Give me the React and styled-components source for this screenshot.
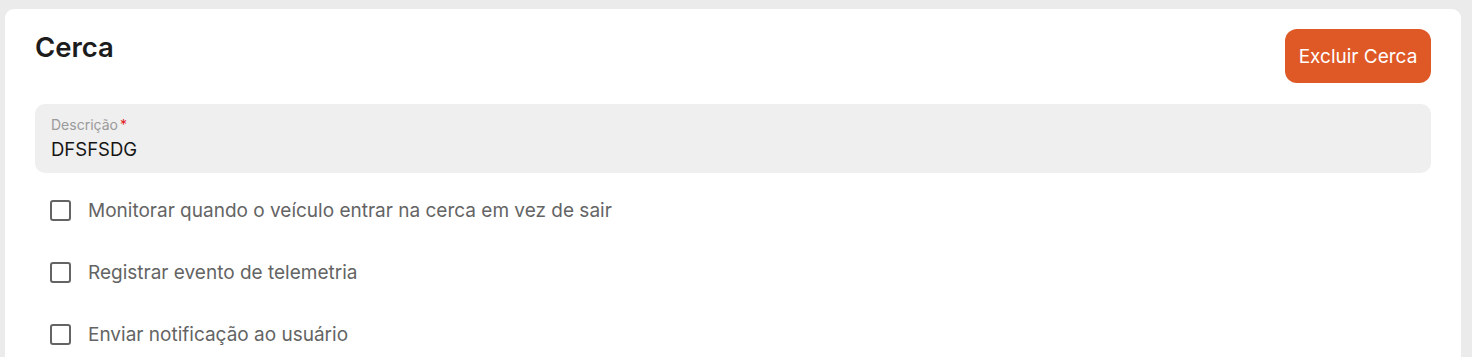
import styled, { createGlobalStyle } from "styled-components";

const GlobalStyle = createGlobalStyle`
  html, body {
    margin: 0;
    padding: 0;
    background: #ebebeb;
    font-family: Inter, "Noto Sans", sans-serif;
  }
`;

const Page = styled.div`
  padding: 9px 11px 0 5px;
  height: 357px;
  box-sizing: border-box;
  overflow: hidden;
`;

const Card = styled.div`
  background: #fff;
  border-radius: 9px;
  padding: 20px 30px 40px 30px;
  min-height: 400px;
  box-sizing: border-box;
`;

const Header = styled.div`
  display: flex;
  justify-content: space-between;
  align-items: flex-start;
`;

const Title = styled.h2`
  margin: 0;
  padding-top: 2px;
  font-size: 27.5px;
  font-weight: 600;
  color: #1c1c1c;
  line-height: 32px;
`;

const DangerButton = styled.button`
  height: 54px;
  width: 146px;
  border: none;
  border-radius: 12px;
  background: #df5927;
  color: #fff;
  font-family: Inter, "Noto Sans", sans-serif;
  font-size: 19px;
  cursor: pointer;
`;

const Field = styled.div`
  margin-top: 21px;
  height: 69px;
  box-sizing: border-box;
  background: #efefef;
  border-radius: 10px;
  padding: 12px 16px;
  display: flex;
  flex-direction: column;
`;

const Label = styled.span`
  font-size: 14px;
  line-height: 17px;
  color: #9a9a9a;
`;

const Required = styled.span`
  color: #e02020;
  margin-left: 2px;
`;

const Value = styled.span`
  margin-top: 4px;
  font-size: 18.5px;
  line-height: 24px;
  color: #151515;
`;

const Options = styled.div`
  display: flex;
  flex-direction: column;
  padding-left: 15px;
  margin-top: 16px;
  gap: 20px;
`;

const Option = styled.label`
  display: flex;
  align-items: center;
  gap: 17px;
  height: 42px;
  cursor: pointer;
`;

const Box = styled.span`
  width: 21px;
  height: 21px;
  box-sizing: border-box;
  border: 2.5px solid #646464;
  border-radius: 3px;
  flex-shrink: 0;
`;

const OptionText = styled.span`
  font-size: 19px;
  color: #646464;
`;

const options = [
  "Monitorar quando o veículo entrar na cerca em vez de sair",
  "Registrar evento de telemetria",
  "Enviar notificação ao usuário",
];

export default function App() {
  return (
    <>
      <GlobalStyle />
      <Page>
        <Card>
          <Header>
            <Title>Cerca</Title>
            <DangerButton>Excluir Cerca</DangerButton>
          </Header>
          <Field>
            <Label>
              Descrição<Required>*</Required>
            </Label>
            <Value>DFSFSDG</Value>
          </Field>
          <Options>
            {options.map((text) => (
              <Option key={text}>
                <Box />
                <OptionText>{text}</OptionText>
              </Option>
            ))}
          </Options>
        </Card>
      </Page>
    </>
  );
}
